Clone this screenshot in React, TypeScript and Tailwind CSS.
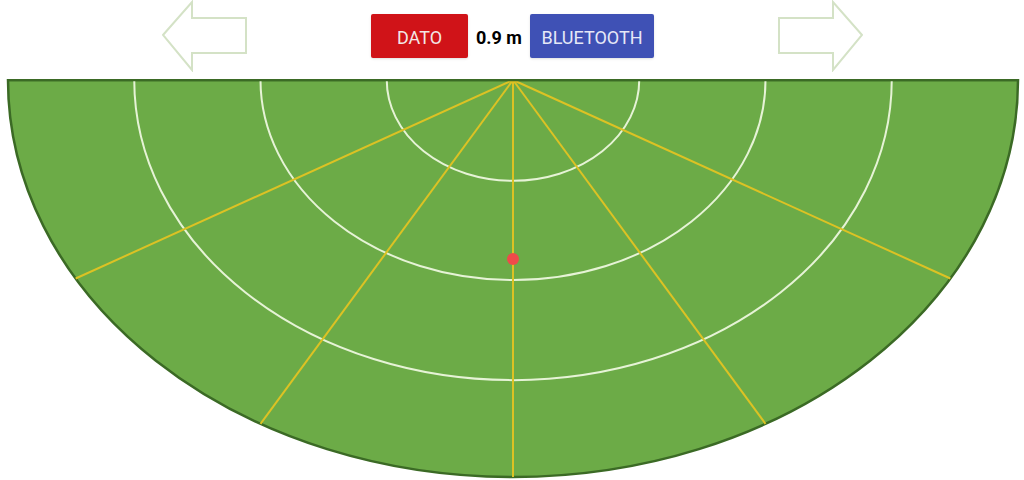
const CX = 513
const CY = 1
const RX = 505
const RY = 397

function arc(fx: number, fy: number) {
  const rx = RX * fx
  const ry = RY * fy
  return `M ${CX - rx} ${CY} A ${rx} ${ry} 0 0 0 ${CX + rx} ${CY}`
}

const angles = [30, 60, 90, 120, 150]
const rings = [
  [0.25, 0.254],
  [0.5, 0.504],
  [0.75, 0.756],
]

function Arrow({ flip }: { flip?: boolean }) {
  return (
    <svg width="86" height="72" viewBox="0 0 86 72" className={flip ? '-scale-x-100' : ''}>
      <polygon
        points="1,35 30,2 30,18 84,18 84,53 30,53 30,70"
        fill="none"
        stroke="#d4e2c6"
        strokeWidth="2"
        strokeLinejoin="miter"
      />
    </svg>
  )
}

function App() {
  return (
    <div className="w-[1024px] h-[480px] bg-white overflow-hidden" style={{ fontFamily: 'Roboto, "Noto Sans", sans-serif' }}>
      {/* top controls */}
      <div className="flex justify-center items-center gap-[123px] h-[72px] pl-[1px]">
        <Arrow />
        <div className="flex items-center gap-[7px]">
          <button className="w-[97px] h-[44px] pt-[2px] bg-[#d01318] text-[#f3e6e6] text-[18px] rounded-[2px] shadow-sm">
            DATO
          </button>
          <span className="text-[18px] pt-[2px] font-bold text-black w-[48px] text-center">0.9 m</span>
          <button className="w-[124px] h-[44px] pt-[2px] bg-[#3f51b5] text-[#e6e8f7] text-[18px] rounded-[2px] shadow-sm">
            BLUETOOTH
          </button>
        </div>
        <Arrow flip />
      </div>

      {/* radar */}
      <svg width="1024" height="401" viewBox="0 0 1024 401" className="mt-[7px] block">
        <path d={`${arc(1, 1)} Z`} fill="#6cab47" stroke="#3b6a25" strokeWidth="2.5" />
        {rings.map(([fx, fy]) => (
          <path key={fx} d={arc(fx, fy)} fill="none" stroke="#e6f3d6" strokeWidth="2" />
        ))}
        {angles.map(a => {
          const t = (a * Math.PI) / 180
          return (
            <line
              key={a}
              x1={CX}
              y1={CY}
              x2={CX + RX * Math.cos(t)}
              y2={CY + RY * Math.sin(t)}
              stroke="#dcc224"
              strokeWidth="2"
            />
          )
        })}
        <line x1={CX - RX} y1={CY} x2={CX + RX} y2={CY} stroke="#3b6a25" strokeWidth="2.5" />
        <circle cx={CX} cy={180} r="6" fill="#ef4a4a" />
      </svg>
    </div>
  )
}

export default App
